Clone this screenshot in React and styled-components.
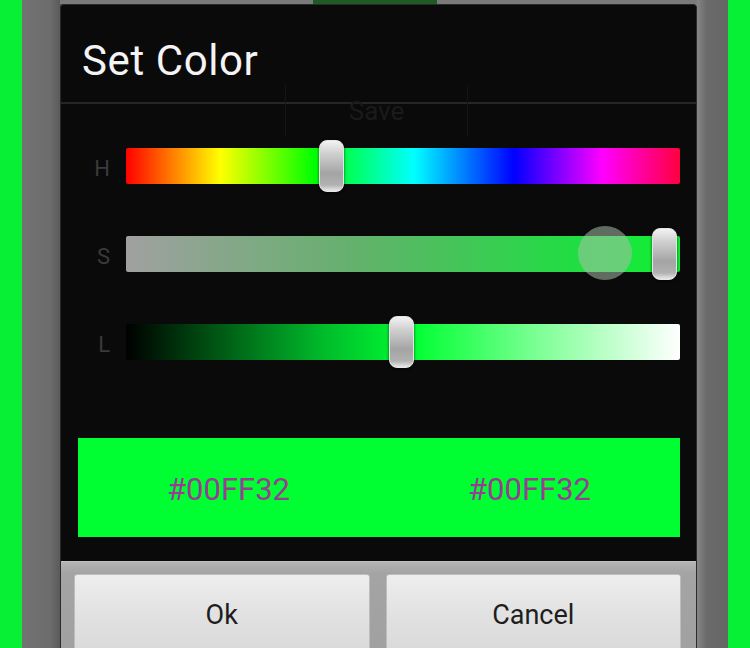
import React from 'react'
import styled, { createGlobalStyle } from 'styled-components'

const GlobalStyle = createGlobalStyle`
  html, body {
    margin: 0;
    padding: 0;
    background: #08f036;
  }
  body {
    font-family: Roboto, 'Noto Sans', 'Liberation Sans', sans-serif;
  }
`

const Page = styled.div`
  height: 648px;
  overflow: hidden;
  background: #08f036;
  padding: 0 22px;
`

const Frame = styled.div`
  height: 100%;
  display: flex;
  flex-direction: column;
  padding: 0 31px 0 38px;
  background: linear-gradient(
    90deg,
    #727272 0%,
    #6c6c6c 4%,
    #5a5a5a 5.4%,
    #6a6a6a 94.6%,
    #8a8a8a 95.4%,
    #6a6a6a 97%,
    #666 100%
  );
`

const TopStrip = styled.div`
  height: 4px;
  flex-shrink: 0;
  display: flex;
  background: #7a7a7a;
`

const Notch = styled.div`
  margin-left: 253px;
  width: 124px;
  background: #1f5a26;
`

const Dialog = styled.div`
  position: relative;
  display: flex;
  flex-direction: column;
  background: #0a0a0a;
  border: 1px solid #2a2a2a;
  border-bottom: none;
  border-radius: 4px 4px 0 0;
`

const Header = styled.div`
  height: 99px;
  display: flex;
  align-items: center;
  padding: 14px 0 0 21px;
  box-sizing: border-box;
  border-bottom: 2px solid #262626;
`

const Title = styled.h1`
  margin: 0;
  font-size: 42px;
  font-weight: 400;
  color: #f4f4f4;
  letter-spacing: 0.6px;
`

const GhostButton = styled.div`
  position: absolute;
  left: 224px;
  top: 80px;
  width: 181px;
  height: 52px;
  display: flex;
  align-items: center;
  justify-content: center;
  border-left: 1px solid #151515;
  border-right: 1px solid #151515;
  color: #1a1a1a;
  font-size: 26px;
`

const Body = styled.div`
  display: flex;
  flex-direction: column;
  gap: 52px;
  padding: 44px 16px 24px 17px;
`

const Row = styled.div`
  display: flex;
  align-items: center;
`

const Label = styled.div`
  width: 48px;
  padding: 4px 16px 0 0;
  box-sizing: border-box;
  text-align: right;
  font-size: 22px;
  color: #3a3a3a;
`

const Track = styled.div`
  position: relative;
  flex: 1;
  height: 36px;
  border-radius: 2px;
  background: ${(p) => p.$fill};
`

const Thumb = styled.div`
  position: absolute;
  top: -8px;
  width: 25px;
  height: 52px;
  box-sizing: border-box;
  border-radius: 8px;
  border: 1px solid #e6e6e6;
  background: linear-gradient(
    180deg,
    #f2f2f2 0%,
    #d0d0d0 25%,
    #a4a4a4 65%,
    #b2b2b2 88%,
    #e8e8e8 100%
  );
  box-shadow: 0 1px 3px rgba(0, 0, 0, 0.7);
`

const Touch = styled.div`
  position: absolute;
  top: -10px;
  width: 54px;
  height: 54px;
  border-radius: 50%;
  background: rgba(170, 190, 170, 0.55);
`

const Swatch = styled.div`
  display: flex;
  height: 99px;
  margin-top: 26px;
  background: #00ff32;
`

const HexCell = styled.div`
  flex: 1;
  display: flex;
  align-items: center;
  justify-content: center;
  padding-top: 3px;
  font-size: 31px;
  color: #983c94;
`

const Footer = styled.div`
  display: flex;
  gap: 16px;
  padding: 12px 15px 0 13px;
  background: linear-gradient(180deg, #b4b4b4 0%, #a4a4a4 10%, #a0a0a0 100%);
  border-top: 1px solid #c0c0c0;
`

const Button = styled.button`
  flex: 1;
  height: 95px;
  padding-bottom: 14px;
  border: 1px solid #bdbdbd;
  border-radius: 3px;
  background: linear-gradient(180deg, #eeeeee 0%, #e2e2e2 40%, #d6d6d6 100%);
  font-family: inherit;
  font-size: 27px;
  color: #1e1e1e;
`

const hue =
  'linear-gradient(90deg, #ff0000 0%, #ffff00 17%, #00ff00 34%, #00ffff 52%, #0000ff 70%, #ff00ff 86%, #ff0040 100%)'
const sat = 'linear-gradient(90deg, #a0a0a0 0%, #66b06e 40%, #22dc44 80%, #10f034 100%)'
const lum = 'linear-gradient(90deg, #000000 0%, #00b82a 35%, #00ff32 52%, #80ff98 75%, #ffffff 100%)'

const sliders = [
  { label: 'H', fill: hue, value: 0.367 },
  { label: 'S', fill: sat, value: 1, touch: 0.904 },
  { label: 'L', fill: lum, value: 0.5 },
]

const Slider = ({ label, fill, value, touch }) => (
  <Row>
    <Label>{label}</Label>
    <Track $fill={fill}>
      {touch !== undefined && (
        <Touch style={{ left: `calc((100% - 54px) * ${touch})` }} />
      )}
      <Thumb style={{ left: `calc((100% - 28px) * ${value})` }} />
    </Track>
  </Row>
)

export default function App() {
  return (
    <Page>
      <GlobalStyle />
      <Frame>
        <TopStrip>
          <Notch />
        </TopStrip>
        <Dialog>
          <Header>
            <Title>Set Color</Title>
          </Header>
          <GhostButton>Save</GhostButton>
          <Body>
            {sliders.map((s) => (
              <Slider key={s.label} {...s} />
            ))}
            <Swatch>
              <HexCell>#00FF32</HexCell>
              <HexCell>#00FF32</HexCell>
            </Swatch>
          </Body>
          <Footer>
            <Button>Ok</Button>
            <Button>Cancel</Button>
          </Footer>
        </Dialog>
      </Frame>
    </Page>
  )
}
